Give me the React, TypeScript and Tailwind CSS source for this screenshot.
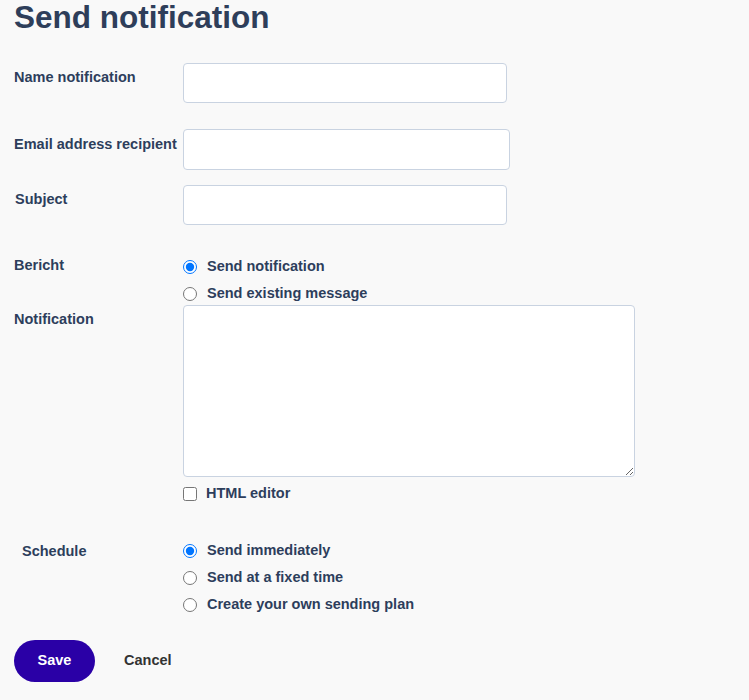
import { useState } from 'react';

const labelCls = 'w-[169px] shrink-0 text-[14.5px] font-bold text-[#2d3e5c]';
const inputCls = 'h-[40px] rounded-[4px] border border-[#c9d3e1] bg-white px-3 text-sm outline-none';

function Radio({
  name,
  label,
  checked,
  onChange,
}: {
  name: string;
  label: string;
  checked: boolean;
  onChange: () => void;
}) {
  return (
    <label className="flex h-[24px] items-center gap-[10px] text-[14.5px] font-bold text-[#2d3e5c]">
      <input type="radio" name={name} checked={checked} onChange={onChange} className="h-[14px] w-[14px]" />
      {label}
    </label>
  );
}

export default function App() {
  const [message, setMessage] = useState('new');
  const [schedule, setSchedule] = useState('now');
  const [html, setHtml] = useState(false);

  return (
    <div
      className="min-h-[700px] bg-[#f9f9f9] pl-[14px]"
      style={{ fontFamily: '"Liberation Sans", Arial, sans-serif' }}
    >
      <h1 className="text-[31.5px] leading-[34px] font-bold text-[#2e3e5a]">Send notification</h1>

      <div className="mt-[29px] flex">
        <div className={`${labelCls} pt-[4px]`}>Name notification</div>
        <input className={`${inputCls} w-[324px]`} />
      </div>

      <div className="mt-[26px] flex">
        <div className={`${labelCls} pt-[5px]`}>Email address recipient</div>
        <input type="email" className={`${inputCls} h-[41px] w-[327px]`} />
      </div>

      <div className="mt-[15px] flex">
        <div className={`${labelCls} pt-[4px] pl-px`}>Subject</div>
        <input className={`${inputCls} w-[324px]`} />
      </div>

      {/* type of message */}
      <div className="mt-[30px] flex">
        <div className={`${labelCls} leading-[20px]`}>Bericht</div>
        <div className="flex flex-col gap-[3px]">
          <Radio name="msg" label="Send notification" checked={message === 'new'} onChange={() => setMessage('new')} />
          <Radio
            name="msg"
            label="Send existing message"
            checked={message === 'existing'}
            onChange={() => setMessage('existing')}
          />
        </div>
      </div>

      <div className="mt-[-1px] flex">
        <div className={`${labelCls} pt-[4px]`}>Notification</div>
        <div className="flex flex-col">
          <textarea className="block h-[172px] w-[452px] rounded-[4px] border border-[#c9d3e1] bg-white p-2 text-sm outline-none" />
          <label className="mt-[5px] flex h-[24px] items-center gap-[9px] text-[14.5px] font-bold text-[#2d3e5c]">
            <input
              type="checkbox"
              checked={html}
              onChange={() => setHtml(!html)}
              className="h-[14px] w-[14px]"
            />
            HTML editor
          </label>
        </div>
      </div>

      <div className="mt-[33px] flex">
        <div className={`${labelCls} pl-[8px] leading-[24px]`}>Schedule</div>
        <div className="flex flex-col gap-[3px]">
          <Radio name="sched" label="Send immediately" checked={schedule === 'now'} onChange={() => setSchedule('now')} />
          <Radio
            name="sched"
            label="Send at a fixed time"
            checked={schedule === 'fixed'}
            onChange={() => setSchedule('fixed')}
          />
          <Radio
            name="sched"
            label="Create your own sending plan"
            checked={schedule === 'plan'}
            onChange={() => setSchedule('plan')}
          />
        </div>
      </div>

      <div className="mt-[23px] flex items-center">
        <button className="h-[42px] w-[81px] rounded-full bg-[#2a00a6] text-[14.5px] font-bold text-white">
          Save
        </button>
        <button className="ml-[29px] text-[14.5px] font-bold text-[#333333]">Cancel</button>
      </div>
    </div>
  );
}
